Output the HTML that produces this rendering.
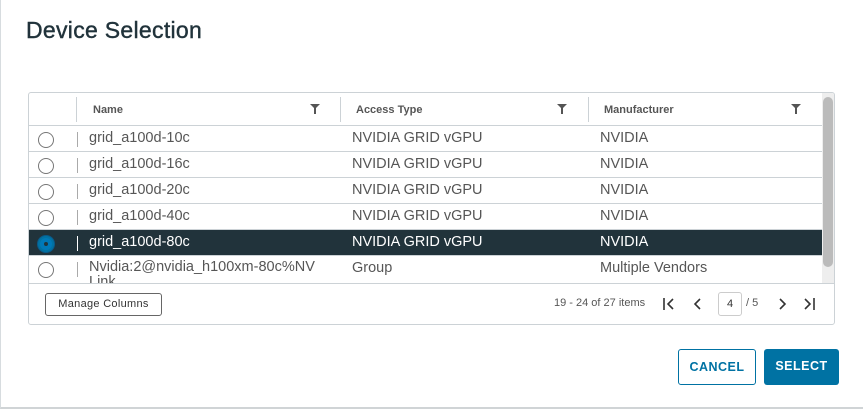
<!DOCTYPE html>
<html><head><style>
*{box-sizing:border-box;margin:0;padding:0}
body{width:863px;height:410px;background:#fff;font-family:"Liberation Sans",sans-serif;position:relative;overflow:hidden;color:#565656}
.frame{position:absolute;left:0;top:0;width:863px;height:409px;border-left:1px solid #d7dcdf;border-bottom:2px solid #d0d4d6}
h1{position:absolute;left:26px;top:17px;font-size:23px;font-weight:normal;color:#21333b;letter-spacing:0.3px;-webkit-text-stroke:0.4px #21333b}
.grid{position:absolute;left:28px;top:92px;width:807px;height:233px;border:1px solid #ccd2d6;border-radius:3px;overflow:hidden}
.hdr{position:absolute;left:0;top:0;width:793px;height:33px;border-bottom:1px solid #ccd2d6;font-size:11px;font-weight:bold;color:#565656}
.hdr span{position:absolute;top:11px}
.vd{position:absolute;width:1px;background:#ccd2d6}
.flt{position:absolute;top:11px;width:0;height:0;border-left:5px solid transparent;border-right:5px solid transparent;border-top:5px solid #555}
.flt:after{content:"";position:absolute;left:-1px;top:-1px;width:2px;height:6px;background:#555}
.row{position:absolute;left:0;width:793px;height:26px;border-bottom:1px solid #ccd2d6;font-size:14.5px;color:#565656}
.row span{position:absolute;top:4px}
.row.sel{background:#21333b;color:#fff}
.radio{position:absolute;left:9px;top:6px;width:16px;height:16px;border:1px solid #777;border-radius:50%;background:#fff}
.sel .radio{border:2px solid #0072a3;background:#0079b8;box-shadow:0 0 0 1px #0a5a8a}
.sel .radio:after{content:"";position:absolute;left:4px;top:4px;width:4px;height:4px;border-radius:50%;background:#21333b}
.rd{position:absolute;left:48px;top:6px;width:1px;height:15px;background:#aaa}
.sel .rd{background:#fff}
.sb{position:absolute;left:793px;top:0;width:13px;height:190px;background:#eee}
.sb div{position:absolute;left:1px;top:4px;width:10px;height:170px;border-radius:5px;background:#bbb}
.foot{position:absolute;left:0;top:190px;width:807px;height:42px;border-top:1px solid #ccd2d6}
.mc{position:absolute;left:16px;top:9px;width:117px;height:23px;border:1px solid #666;border-radius:3px;font-size:11px;color:#333;text-align:center;line-height:21px;letter-spacing:0.3px}
.pg{position:absolute;top:13px;font-size:11px;color:#565656}
.pi{position:absolute;left:689px;top:8px;width:24px;height:24px;border:1px solid #ccc;border-radius:3px;font-size:11px;text-align:center;line-height:22px;color:#333}
.btn{position:absolute;top:349px;height:36px;border-radius:3px;font-size:12.5px;font-weight:bold;text-align:center;line-height:34px;letter-spacing:0.5px}
</style></head><body>
<div class="frame"></div>
<h1>Device Selection</h1>
<div class="grid">
 <div class="hdr">
  <div class="vd" style="left:47px;top:4px;height:25px"></div>
  <span style="left:64px">Name</span><div class="flt" style="left:281px"></div>
  <div class="vd" style="left:311px;top:4px;height:25px"></div>
  <span style="left:327px">Access Type</span><div class="flt" style="left:528px"></div>
  <div class="vd" style="left:559px;top:4px;height:25px"></div>
  <span style="left:575px">Manufacturer</span><div class="flt" style="left:762px"></div>
 </div>
 <div class="row" style="top:33px"><div class="radio"></div><div class="rd"></div><span style="left:60px">grid_a100d-10c</span><span style="left:323px">NVIDIA GRID vGPU</span><span style="left:571px">NVIDIA</span></div>
 <div class="row" style="top:59px"><div class="radio"></div><div class="rd"></div><span style="left:60px">grid_a100d-16c</span><span style="left:323px">NVIDIA GRID vGPU</span><span style="left:571px">NVIDIA</span></div>
 <div class="row" style="top:85px"><div class="radio"></div><div class="rd"></div><span style="left:60px">grid_a100d-20c</span><span style="left:323px">NVIDIA GRID vGPU</span><span style="left:571px">NVIDIA</span></div>
 <div class="row" style="top:111px"><div class="radio"></div><div class="rd"></div><span style="left:60px">grid_a100d-40c</span><span style="left:323px">NVIDIA GRID vGPU</span><span style="left:571px">NVIDIA</span></div>
 <div class="row sel" style="top:137px"><div class="radio"></div><div class="rd"></div><span style="left:60px">grid_a100d-80c</span><span style="left:323px">NVIDIA GRID vGPU</span><span style="left:571px">NVIDIA</span></div>
 <div class="row" style="top:163px;border:none;height:27px;overflow:hidden"><div class="radio"></div><div class="rd"></div><span style="left:60px;line-height:15px;top:4px;width:232px;word-break:break-all">Nvidia:2@nvidia_h100xm-80c%NVLink</span><span style="left:323px">Group</span><span style="left:571px">Multiple Vendors</span></div>
 <div class="sb"><div></div></div>
 <div class="foot">
  <div class="mc">Manage Columns</div>
  <div class="pg" style="left:525px">19 - 24 of 27 items</div>
  <svg style="position:absolute;left:633px;top:13px" width="140" height="14" viewBox="0 0 140 14" fill="none" stroke="#333" stroke-width="1.6">
   <path d="M2 1v12M11 2L6 7l5 5"/>
   <path d="M38 2L33 7l5 5"/>
   <path d="M118 2l5 5-5 5"/>
   <path d="M140 0"/>
  </svg>
  <svg style="position:absolute;left:773px;top:13px" width="20" height="14" viewBox="0 0 20 14" fill="none" stroke="#333" stroke-width="1.6">
   <path d="M3 2l5 5-5 5M12 1v12"/>
  </svg>
  <div class="pi">4</div>
  <div class="pg" style="left:717px">/ 5</div>
 </div>
</div>
<div class="btn" style="left:678px;width:78px;border:1px solid #0072a3;color:#0072a3">CANCEL</div>
<div class="btn" style="left:764px;width:75px;background:#0072a3;color:#fff">SELECT</div>
</body></html>
